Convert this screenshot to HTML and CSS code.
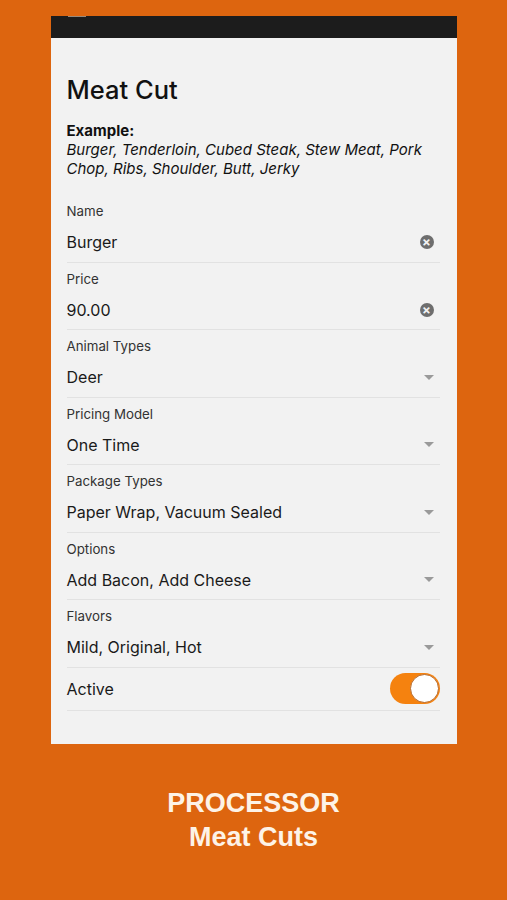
FILE: index.html
```html
<!DOCTYPE html>
<html lang="en">
<head>
    <meta charset="UTF-8">
    <meta name="viewport" content="width=device-width, initial-scale=1.0">
    <title>Meat Cut</title>
    <link rel="stylesheet" href="styles.css">
</head>
<body>

    <div class="phone">
        <div class="statusBar"><span class="notch"></span></div>
        <div class="content">
            <h1>Meat Cut</h1>
            <div class="example">
                <b>Example:</b>
                <i>Burger, Tenderloin, Cubed Steak, Stew Meat, Pork Chop, Ribs, Shoulder, Butt, Jerky</i>
            </div>

            <div class="fields">
                <div class="field">
                    <label>Name</label>
                    <div class="value"><span>Burger</span><span class="clear">&times;</span></div>
                </div>
                <div class="field">
                    <label>Price</label>
                    <div class="value"><span>90.00</span><span class="clear">&times;</span></div>
                </div>
                <div class="field">
                    <label>Animal Types</label>
                    <div class="value"><span>Deer</span><span class="caret"></span></div>
                </div>
                <div class="field">
                    <label>Pricing Model</label>
                    <div class="value"><span>One Time</span><span class="caret"></span></div>
                </div>
                <div class="field">
                    <label>Package Types</label>
                    <div class="value"><span>Paper Wrap, Vacuum Sealed</span><span class="caret"></span></div>
                </div>
                <div class="field">
                    <label>Options</label>
                    <div class="value"><span>Add Bacon, Add Cheese</span><span class="caret"></span></div>
                </div>
                <div class="field">
                    <label>Flavors</label>
                    <div class="value"><span>Mild, Original, Hot</span><span class="caret"></span></div>
                </div>
                <div class="toggleRow">
                    <span>Active</span>
                    <span class="toggle"><span class="knob"></span></span>
                </div>
            </div>
        </div>
    </div>

    <div class="caption">
        <div>PROCESSOR</div>
        <div>Meat Cuts</div>
    </div>

</body>
</html>
```

FILE: styles.css
```css
body {
    margin: 0;
    background-color: #dd650f;
    padding-top: 16px;
    font-family: "Inter", "Noto Sans", sans-serif;
    height: 884px;
}

.phone {
    width: 406px;
    margin: 0 auto;
    background-color: #f2f2f2;
}

.statusBar {
    height: 22px;
    background-color: #1c1c1c;
    position: relative;
}

.notch {
    position: absolute;
    left: 17px;
    top: 0;
    width: 18px;
    height: 1px;
    background-color: #9a8a7a;
}

.content {
    padding: 0 17px 33px 16px;
}

h1 {
    margin: 0;
    padding-top: 37px;
    font-size: 25.5px;
    line-height: 30px;
    font-weight: 500;
    color: #111;
}

.example {
    margin-top: 16px;
    font-size: 15px;
    line-height: 19px;
    color: #111;
}

.example b {
    display: block;
    font-weight: 700;
}

.example i {
    display: block;
}

.fields {
    margin-top: 17px;
}

.field {
    padding: 8px 0 7.5px 0;
    border-bottom: 1px solid #e2e2e2;
}

label {
    display: block;
    font-size: 13.3px;
    line-height: 16px;
    color: #333;
}

.value {
    margin-top: 11px;
    display: flex;
    justify-content: space-between;
    align-items: center;
    font-size: 16px;
    line-height: 24px;
    color: #1a1a1a;
}

.clear {
    width: 14px;
    height: 14px;
    margin-right: 6px;
    border-radius: 50%;
    background-color: #6e6e6e;
    color: #f2f2f2;
    font-size: 13px;
    line-height: 14px;
    text-align: center;
    font-weight: 700;
}

.caret {
    width: 0;
    height: 0;
    margin-right: 6px;
    border-left: 5px solid transparent;
    border-right: 5px solid transparent;
    border-top: 5px solid #9a9a9a;
}

.toggleRow {
    display: flex;
    justify-content: space-between;
    align-items: center;
    height: 42px;
    border-bottom: 1px solid #e2e2e2;
    font-size: 16px;
    color: #1a1a1a;
}

.toggle {
    width: 50px;
    height: 31px;
    border-radius: 16px;
    background-color: #f5820f;
    position: relative;
}

.knob {
    position: absolute;
    right: 1px;
    top: 1px;
    width: 27px;
    height: 27px;
    border-radius: 50%;
    background-color: #fff;
    border: 1px solid #b86a2a;
}

.caption {
    margin-top: 42px;
    text-align: center;
    font-family: "Liberation Sans", Arial, sans-serif;
    font-weight: 700;
    font-size: 27px;
    line-height: 34px;
    color: #fdf3e7;
}
```
